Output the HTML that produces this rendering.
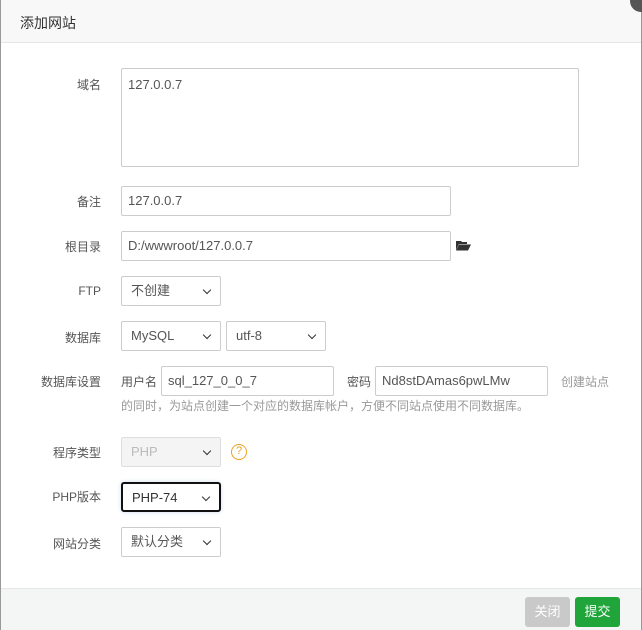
<!DOCTYPE html>
<html><head><meta charset="utf-8"><style>
*{box-sizing:border-box;margin:0;padding:0}
body{width:642px;height:630px;background:#fff;font-family:"Liberation Sans","Noto Sans CJK SC",sans-serif;font-size:12px;color:#333;position:relative;overflow:hidden}
.frame{position:absolute;left:0;top:0;width:642px;height:630px;border-left:1px solid #999;border-right:1px solid #999}
.hd{position:absolute;left:1px;right:1px;top:0;height:43px;background:#f8f8f8;border-bottom:1px solid #e6e6e6}
.hd span{position:absolute;left:19px;top:13px;font-size:14px;color:#333}
.x{position:absolute;right:-10px;top:-10px;width:22px;height:22px;border-radius:50%;background:#555}
.lbl{position:absolute;right:541px;font-size:12px;color:#555;white-space:nowrap;text-align:right}
.in{position:absolute;border:1px solid #ccc;border-radius:2px;height:30px;padding:0 6px;line-height:28px;font-size:13px;color:#555;background:#fff}
.sel{position:absolute;border:1px solid #ccc;border-radius:2px;height:30px;padding:0 9px;line-height:28px;font-size:13px;color:#555;background:#fff}
.sel:after{content:"";position:absolute;right:10px;top:10px;width:5px;height:5px;border-right:1.5px solid #333;border-bottom:1.5px solid #333;transform:rotate(45deg)}
.ft{position:absolute;left:1px;right:1px;top:588px;height:42px;background:#f4f5f5;border-top:1px solid #e6e6e6}
.btn{position:absolute;top:597px;height:30px;width:45px;border-radius:3px;color:#fff;font-size:13px;text-align:center;line-height:30px}
.tip{position:absolute;color:#999;font-size:12px}
</style></head><body>
<div class="frame"></div>
<div class="hd"><span>添加网站</span></div>
<div class="x"></div>

<div class="lbl" style="top:76px">域名</div>
<div class="in" style="left:121px;top:68px;width:458px;height:99px;line-height:normal;padding-top:8px">127.0.0.7</div>

<div class="lbl" style="top:193px">备注</div>
<div class="in" style="left:121px;top:186px;width:330px">127.0.0.7</div>

<div class="lbl" style="top:238px">根目录</div>
<div class="in" style="left:121px;top:231px;width:330px">D:/wwwroot/127.0.0.7</div>
<svg style="position:absolute;left:456px;top:240px" width="15" height="11" viewBox="0 0 15 11"><path d="M0 1h5l1 1h5v2H3L0 10z" fill="#333"/><path d="M3 4.5h12l-3 6H0z" fill="#333"/></svg>

<div class="lbl" style="top:284px">FTP</div>
<div class="sel" style="left:121px;top:276px;width:100px">不创建</div>

<div class="lbl" style="top:329px">数据库</div>
<div class="sel" style="left:121px;top:321px;width:100px">MySQL</div>
<div class="sel" style="left:226px;top:321px;width:100px">utf-8</div>

<div class="lbl" style="top:373px">数据库设置</div>
<div style="position:absolute;left:121px;top:373px;color:#555">用户名</div>
<div class="in" style="left:161px;top:366px;width:173px">sql_127_0_0_7</div>
<div style="position:absolute;left:347px;top:373px;color:#555">密码</div>
<div class="in" style="left:375px;top:366px;width:173px">Nd8stDAmas6pwLMw</div>
<div class="tip" style="left:561px;top:373px">创建站点</div>
<div class="tip" style="left:121px;top:397px">的同时，为站点创建一个对应的数据库帐户，方便不同站点使用不同数据库。</div>

<div class="lbl" style="top:444px">程序类型</div>
<div class="sel" style="left:121px;top:437px;width:100px;background:#f4f4f4;color:#bbb;border-color:#ddd">PHP</div>
<div style="position:absolute;left:231px;top:444px;width:16px;height:16px;border:1.5px solid #f0a020;border-radius:50%;color:#f0a020;font-size:11px;text-align:center;line-height:13px">?</div>

<div class="lbl" style="top:488px">PHP版本</div>
<div class="sel" style="left:121px;top:482px;width:100px;border:2px solid #111;border-radius:3px;color:#333;box-shadow:0 0 4px #cde">PHP-74</div>

<div class="lbl" style="top:535px">网站分类</div>
<div class="sel" style="left:121px;top:527px;width:100px">默认分类</div>

<div class="ft"></div>
<div class="btn" style="left:525px;background:#c9c9c9">关闭</div>
<div class="btn" style="left:575px;background:#20a53a">提交</div>
</body></html>
